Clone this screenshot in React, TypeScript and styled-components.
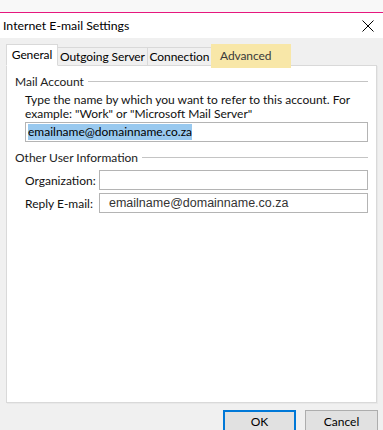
import styled, { createGlobalStyle } from "styled-components";

const GlobalStyle = createGlobalStyle`
  html, body {
    margin: 0;
    padding: 0;
    background: #f0f0f0;
  }
  body {
    font-family: Lato, "Liberation Sans", sans-serif;
    font-size: 12px;
    color: #000;
  }
`;

const Window = styled.div`
  width: 383px;
  height: 430px;
  overflow: hidden;
  background: #f0f0f0;
  display: flex;
  flex-direction: column;
`;

const TopStrip = styled.div`
  height: 12px;
  flex: none;
  background: #f8f8f8;
  border-bottom: 1px solid #e5187e;
`;

const TitleBar = styled.div`
  height: 25px;
  flex: none;
  background: #fff;
  display: flex;
  align-items: center;
  justify-content: space-between;
  padding: 0 9px 0 3px;
  font-size: 12.3px;
`;

const CloseIcon = styled.svg`
  width: 12px;
  height: 12px;
`;

const Body = styled.div`
  flex: 1;
  padding: 6px 5px 0 6px;
  display: flex;
  flex-direction: column;
`;

const TabStrip = styled.div`
  display: flex;
  align-items: flex-end;
  height: 21px;
  flex: none;
  position: relative;
  z-index: 1;
`;

const Tab = styled.div<{ $active?: boolean; $w: number }>`
  width: ${(p) => p.$w}px;
  flex: none;
  white-space: nowrap;
  height: ${(p) => (p.$active ? "22px" : "18px")};
  display: flex;
  align-items: center;
  justify-content: center;
  box-sizing: border-box;
  border: 1px solid #d9d9d9;
  border-bottom: ${(p) => (p.$active ? "1px solid #fff" : "none")};
  margin-left: ${(p) => (p.$active ? "0" : "-1px")};
  background: ${(p) => (p.$active ? "#fff" : "#f0f0f0")};
  margin-bottom: ${(p) => (p.$active ? "-1px" : "0")};
  padding-bottom: ${(p) => (p.$active ? "2px" : "0")};
  letter-spacing: -0.1px;
`;

const HighlightTab = styled(Tab)`
  background: #f8e7a8;
  border-color: #f8e7a8;
  color: #3a3a3a;
  height: 24px;
  margin-bottom: -3px;
  align-items: flex-start;
  justify-content: flex-start;
  padding-top: 3px;
  padding-left: 8px;
`;

const Panel = styled.div`
  height: 338px;
  width: 371px;
  flex: none;
  box-sizing: border-box;
  background: #fff;
  border: 1px solid #d9d9d9;
  box-shadow: 1px 1px 0 #e8e8e8;
  padding: 7px 8px 0 8px;
`;

const Group = styled.div`
  margin-bottom: 7px;
`;

const GroupHeader = styled.div`
  display: flex;
  align-items: center;
  gap: 4px;
  height: 16px;
  color: #222;
  &::after {
    content: "";
    flex: 1;
    height: 1px;
    background: #c4c4c4;
  }
`;

const GroupBody = styled.div<{ $top: number }>`
  padding: ${(p) => p.$top}px 0 0 10px;
`;

const Hint = styled.div`
  line-height: 14px;
  color: #111;
  margin-bottom: 1px;
`;

const Field = styled.div`
  height: 20px;
  flex: 1;
  box-sizing: border-box;
  border: 1px solid #b4b4b4;
  background: #fff;
  display: flex;
  align-items: center;
  padding-left: 2px;
`;

const Selected = styled.span`
  background: #99c9ef;
  color: #000;
  line-height: 16px;
`;

const Row = styled.div`
  display: flex;
  align-items: center;
  margin-bottom: 3px;
`;

const Label = styled.div`
  width: 74px;
  flex: none;
  color: #111;
`;

const LargeValue = styled.span`
  font-family: "Liberation Sans", Arial, sans-serif;
  font-size: 12.5px;
  color: #333;
  padding-left: 7px;
`;

const ButtonRow = styled.div`
  display: flex;
  justify-content: flex-end;
  gap: 9px;
  padding: 7px 0 0 0;
`;

const Button = styled.div<{ $default?: boolean }>`
  width: 73px;
  height: 24px;
  box-sizing: border-box;
  background: #e1e1e1;
  border: ${(p) => (p.$default ? "2px solid #0078d7" : "1px solid #adadad")};
  display: flex;
  align-items: center;
  justify-content: center;
  padding-bottom: 2px;
`;

export default function App() {
  return (
    <>
      <GlobalStyle />
      <Window>
        <TopStrip />
        <TitleBar>
          <span>Internet E-mail Settings</span>
          <CloseIcon viewBox="0 0 12 12">
            <path d="M0.5 0.5L11.5 11.5M11.5 0.5L0.5 11.5" stroke="#000" strokeWidth="1" fill="none" />
          </CloseIcon>
        </TitleBar>
        <Body>
          <TabStrip>
            <Tab $active $w={52}>General</Tab>
            <Tab $w={91}>Outgoing Server</Tab>
            <Tab $w={65}>Connection</Tab>
            <HighlightTab $w={80}>Advanced</HighlightTab>
          </TabStrip>
          <Panel>
            <Group>
              <GroupHeader>Mail Account</GroupHeader>
              <GroupBody $top={4}>
                <Hint>
                  Type the name by which you want to refer to this account. For
                  <br />
                  example: "Work" or "Microsoft Mail Server"
                </Hint>
                <Field>
                  <Selected>emailname@domainname.co.za</Selected>
                </Field>
              </GroupBody>
            </Group>
            <Group>
              <GroupHeader>Other User Information</GroupHeader>
              <GroupBody $top={5}>
                <Row>
                  <Label>Organization:</Label>
                  <Field />
                </Row>
                <Row>
                  <Label>Reply E-mail:</Label>
                  <Field>
                    <LargeValue>emailname@domainname.co.za</LargeValue>
                  </Field>
                </Row>
              </GroupBody>
            </Group>
          </Panel>
          <ButtonRow>
            <Button $default>OK</Button>
            <Button>Cancel</Button>
          </ButtonRow>
        </Body>
      </Window>
    </>
  );
}
